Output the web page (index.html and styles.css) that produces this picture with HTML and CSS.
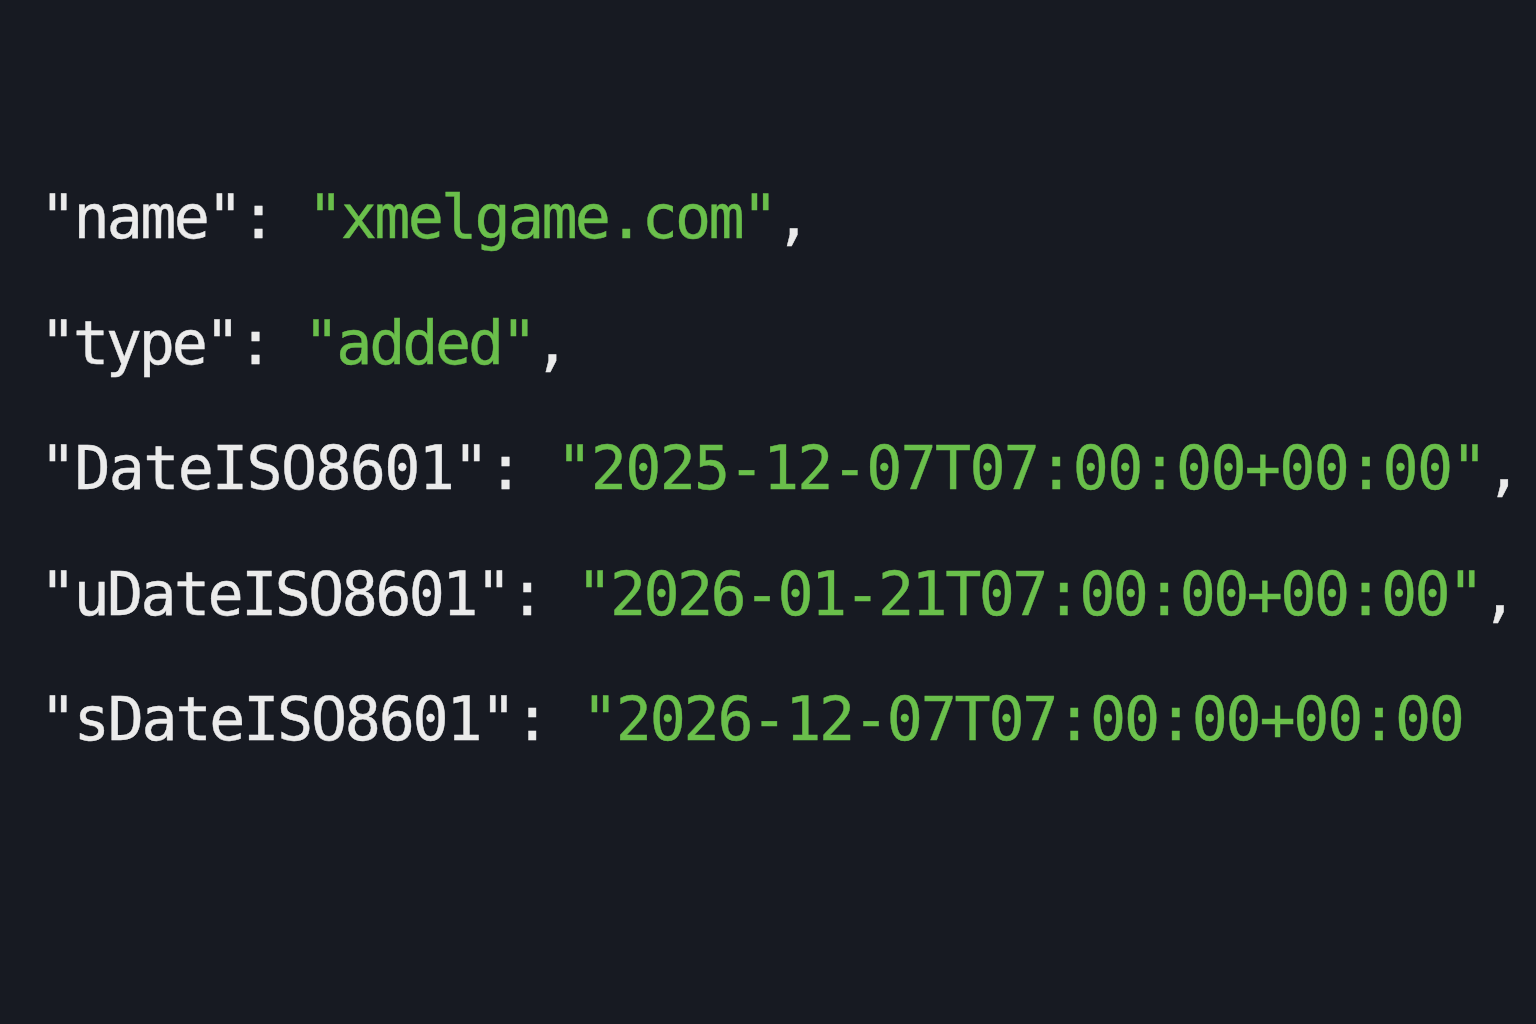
FILE: index.html
```html
<!DOCTYPE html>
<html lang="en">
<head>
<meta charset="utf-8">
<title>JSON snippet</title>
<link rel="stylesheet" href="styles.css">
</head>
<body>
<main class="screen">
  <pre class="code"><span class="line line--tight"><span class="key">"name"</span><span class="punc">:</span> <span class="str">"xmelgame.com"</span><span class="punc">,</span></span>
<span class="line line--tighter"><span class="key">"type"</span><span class="punc">:</span> <span class="str">"added"</span><span class="punc">,</span></span>
<span class="line line--wide"><span class="key">"DateISO8601"</span><span class="punc">:</span> <span class="str">"2025-12-07T07:00:00+00:00"</span><span class="punc">,</span></span>
<span class="line"><span class="key">"uDateISO8601"</span><span class="punc">:</span> <span class="str">"2026-01-21T07:00:00+00:00"</span><span class="punc">,</span></span>
<span class="line line--loose"><span class="key">"sDateISO8601"</span><span class="punc">:</span> <span class="str">"2026-12-07T07:00:00+00:00</span></span></pre>
</main>
</body>
</html>
```

FILE: styles.css
```css
html, body {
  margin: 0;
  padding: 0;
  background: #171a22;
}

.screen {
  width: 1536px;
  height: 1024px;
  overflow: hidden;
  background: #171a22;
  box-sizing: border-box;
  padding: 155px 0 0 40px;
}

.code {
  margin: 0;
  font-family: "DejaVu Sans Mono", "Liberation Mono", monospace;
  font-size: 60px;
  letter-spacing: -2.6px;
  line-height: 125.5px;
  color: #ebebeb;
  white-space: pre;
  -webkit-text-stroke: 0.4px currentColor;
}

.line--tight {
  letter-spacing: -2.7px;
}

.line--tighter {
  letter-spacing: -3.2px;
}

.line--wide {
  letter-spacing: -1.7px;
}

.line--loose {
  letter-spacing: -2.25px;
}

.key,
.punc {
  color: #ebebeb;
}

.str {
  color: #6abf4b;
}
```
